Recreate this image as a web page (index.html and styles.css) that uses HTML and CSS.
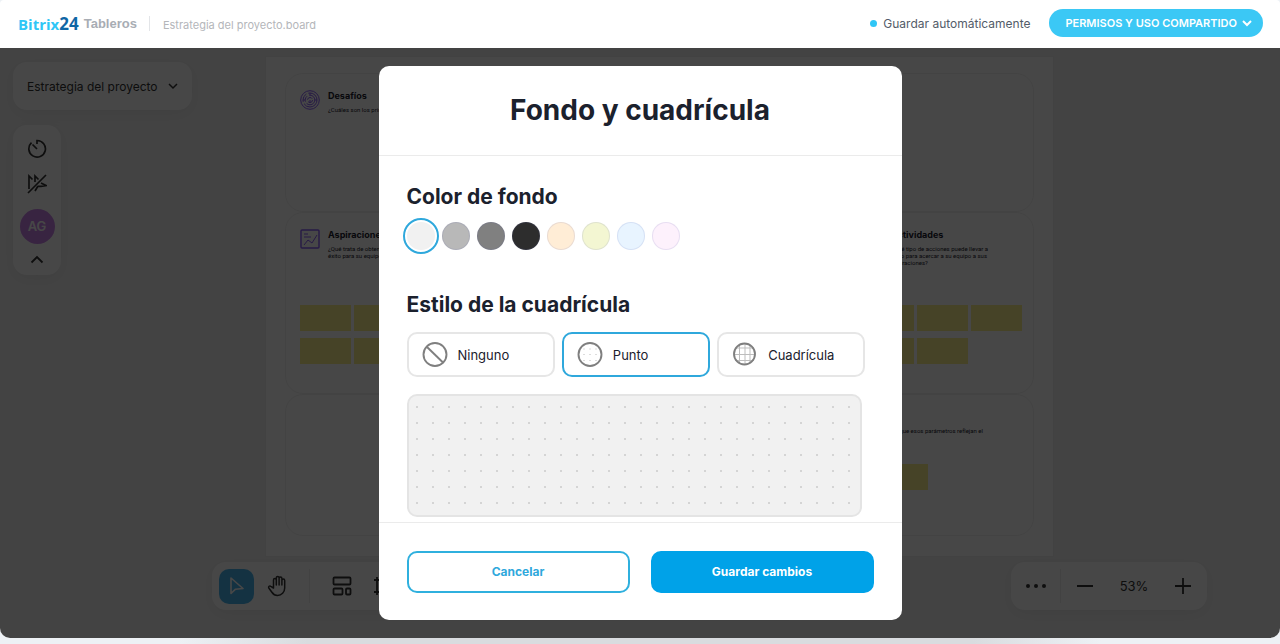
FILE: index.html
```html
<!DOCTYPE html>
<html lang="es">
<head>
    <meta charset="UTF-8">
    <meta name="viewport" content="width=device-width, initial-scale=1.0">
    <title>Estrategia del proyecto.board</title>
    <link rel="stylesheet" href="styles.css">
</head>
<body>
    <header class="topbar">
        <a class="logo" href="#"><span class="logo-name">Bitrix</span><span class="logo-num">24</span></a>
        <span class="product">Tableros</span>
        <span class="file-name">Estrategia del proyecto.board</span>
        <span class="autosave">Guardar automáticamente</span>
        <button class="share" type="button">
            PERMISOS Y USO COMPARTIDO
            <svg width="10" height="7" viewBox="0 0 10 7"><path d="M1 1l4 4 4-4" fill="none" stroke="currentColor" stroke-width="2"/></svg>
        </button>
    </header>

    <main class="board">
        <!-- Lienzo -->
        <div class="frame">
            <section class="card card-wide">
                <div class="card-head">
                    <svg class="card-icon" width="20" height="20" viewBox="0 0 20 20" fill="none" stroke="currentColor">
                        <circle cx="10" cy="10" r="9.3"/>
                        <circle cx="10" cy="10" r="7" stroke-dasharray="18 2 9 2"/>
                        <circle cx="10" cy="10" r="4.8" stroke-dasharray="11 2 6 2"/>
                        <circle cx="10" cy="10" r="2.5" stroke-dasharray="6 2"/>
                        <path d="M10 10v3M3 10h2M15 10h2M10 3v2"/>
                    </svg>
                    <div>
                        <h4>Desafíos</h4>
                        <p>¿Cuáles son los principales?</p>
                    </div>
                </div>
            </section>
            <section class="card">
                <div class="card-head">
                    <svg class="card-icon" width="20" height="20" viewBox="0 0 20 20" fill="none" stroke="currentColor">
                        <rect x="1" y="1" width="18" height="18" rx="1" stroke-width="1.4"/>
                        <path d="M4 5h4M4 8h7M4 16l4-5 4 3 5-8"/>
                    </svg>
                    <div>
                        <h4>Aspiraciones</h4>
                        <p>¿Qué trata de obtener con<br>éxito para su equipo?</p>
                    </div>
                </div>
                <div class="notes">
                    <i></i><i></i><i></i><i></i><i></i>
                </div>
            </section>
            <section class="card"></section>
            <section class="card card-actions">
                <div class="card-head">
                    <span class="card-icon"></span>
                    <div>
                        <h4>Actividades</h4>
                        <p>¿Qué tipo de acciones puede llevar a<br>cabo para acercar a su equipo a sus<br>aspiraciones?</p>
                    </div>
                </div>
                <div class="notes">
                    <i></i><i></i><i></i><i></i><i></i>
                </div>
            </section>
            <section class="card card-wide card-last">
                <p>¿Por qué cree que esos parámetros reflejan el</p>
                <div class="notes"><i></i><i></i></div>
            </section>
        </div>

        <button class="panel board-name" type="button">
            Estrategia del proyecto
            <svg width="10" height="7" viewBox="0 0 10 7"><path d="M1 1l4 4 4-4" fill="none" stroke="currentColor" stroke-width="1.5"/></svg>
        </button>

        <div class="panel side-panel">
            <button type="button" aria-label="Temporizador">
                <svg width="20" height="20" viewBox="0 0 20 20" fill="none" stroke="currentColor" stroke-width="1.7"><path d="M10 5V1.500a8.300 8.300 0 1 1-5.500 2.200M10 10L5.500 5.500"/></svg>
            </button>
            <button type="button" aria-label="Ocultar cursores">
                <svg width="20" height="20" viewBox="0 0 20 20" fill="none" stroke="currentColor" stroke-width="1.7"><path d="M1 19L19 1M2 15V2l3.500 3.500M8 8V2l3.500 3.500M14 9l5 2.500-5 .8-3 0M11 12l-3 5"/></svg>
            </button>
            <span class="avatar">AG</span>
            <button type="button" aria-label="Contraer">
                <svg width="14" height="9" viewBox="0 0 14 9"><path d="M1.500 7.500L7 2l5.500 5.500" fill="none" stroke="currentColor" stroke-width="1.800"/></svg>
            </button>
        </div>

        <div class="panel tools">
            <button class="active" type="button" aria-label="Seleccionar">
                <svg width="18" height="20" viewBox="0 0 18 20"><path d="M3 2v15.500l4.500-4.300 7.500-.7z" fill="none" stroke="currentColor" stroke-width="1.600" stroke-linejoin="round"/></svg>
            </button>
            <button type="button" aria-label="Mover">
                <svg width="22" height="22" viewBox="0 0 22 22"><path d="M6.500 13V5a1.400 1.400 0 0 1 2.800 0v5V2.800a1.400 1.400 0 0 1 2.800 0V10 3.500a1.400 1.400 0 0 1 2.800 0V10 5.500a1.400 1.400 0 0 1 2.800 0V13a7.500 7.500 0 0 1-7.200 7.500c-3 0-4.500-1.500-5.800-3.500L1.800 13c-.8-1.500.8-2.600 2-1.700z" fill="none" stroke="currentColor" stroke-width="1.500" stroke-linejoin="round"/></svg>
            </button>
            <span class="divider"></span>
            <button type="button" aria-label="Plantillas">
                <svg width="20" height="20" viewBox="0 0 20 20" fill="none" stroke="currentColor" stroke-width="1.800"><rect x="1.500" y="1.500" width="17" height="7" rx="1"/><rect x="1.500" y="12.500" width="9" height="6" rx="1"/><rect x="14" y="12.500" width="4.500" height="6" rx="1"/></svg>
            </button>
            <button type="button" aria-label="Marco">
                <svg width="20" height="20" viewBox="0 0 20 20"><path d="M4 1v18M16 1v18M1 4h18M1 16h18" fill="none" stroke="currentColor" stroke-width="1.800"/></svg>
            </button>
        </div>

        <div class="panel zoom">
            <button type="button" aria-label="Más">
                <svg width="20" height="4" viewBox="0 0 20 4" fill="currentColor"><circle cx="2" cy="2" r="2"/><circle cx="10" cy="2" r="2"/><circle cx="18" cy="2" r="2"/></svg>
            </button>
            <span class="divider"></span>
            <button type="button" aria-label="Alejar">
                <svg width="18" height="18" viewBox="0 0 18 18"><path d="M1 9h16" stroke="currentColor" stroke-width="1.800"/></svg>
            </button>
            <span class="zoom-value">53%</span>
            <button type="button" aria-label="Acercar">
                <svg width="18" height="18" viewBox="0 0 18 18"><path d="M1 9h16M9 1v16" stroke="currentColor" stroke-width="1.800"/></svg>
            </button>
        </div>

        <div class="overlay">
            <form class="modal" role="dialog" aria-labelledby="modal-title">
                <h2 id="modal-title">Fondo y cuadrícula</h2>
                <div class="modal-body">
                    <h3>Color de fondo</h3>
                    <div class="swatches">
                        <input type="radio" name="color" class="sw-light" aria-label="Gris claro" checked>
                        <input type="radio" name="color" class="sw-silver" aria-label="Plata">
                        <input type="radio" name="color" class="sw-gray" aria-label="Gris">
                        <input type="radio" name="color" class="sw-black" aria-label="Negro">
                        <input type="radio" name="color" class="sw-orange" aria-label="Naranja">
                        <input type="radio" name="color" class="sw-lime" aria-label="Lima">
                        <input type="radio" name="color" class="sw-blue" aria-label="Azul">
                        <input type="radio" name="color" class="sw-pink" aria-label="Rosa">
                    </div>

                    <h3>Estilo de la cuadrícula</h3>
                    <div class="grid-styles">
                        <label>
                            <input type="radio" name="grid">
                            <svg width="26" height="26" viewBox="0 0 26 26" fill="none" stroke="#7f7f7f" stroke-width="1.900"><circle cx="13" cy="12.500" r="11.500"/><path d="M4.500 4.500l17 16.500"/></svg>
                            Ninguno
                        </label>
                        <label>
                            <input type="radio" name="grid" checked>
                            <svg width="26" height="26" viewBox="0 0 26 26">
                                <circle cx="13" cy="12.500" r="11.500" fill="none" stroke="#7f7f7f" stroke-width="1.900"/>
                                <path d="M6.500 12.500h1m5 0h1m5 0h1M6.500 7h1m5 0h1m5 0h1M6.500 18.500h1m5 0h1m5 0h1" stroke="#bbb"/>
                            </svg>
                            Punto
                        </label>
                        <label>
                            <input type="radio" name="grid">
                            <svg width="26" height="26" viewBox="0 0 26 26" fill="none">
                                <path d="M7.500 3v18M13 1.500v21M18 3v18M3 6h19M2 12.500h21M3 18.500h19" stroke="#bdbdbd"/>
                                <circle cx="12.500" cy="12" r="10.500" stroke="#7f7f7f" stroke-width="1.900"/>
                            </svg>
                            Cuadrícula
                        </label>
                    </div>
                    <div class="preview"></div>
                </div>
                <div class="modal-footer">
                    <button class="btn" type="button">Cancelar</button>
                    <button class="btn btn-primary" type="button">Guardar cambios</button>
                </div>
            </form>
        </div>
    </main>
</body>
</html>
```
FILE: styles.css
```css
* {
    box-sizing: border-box;
}

body {
    margin: 0;
    height: 100vh;
    display: flex;
    flex-direction: column;
    padding-bottom: 6px;
    font-family: Inter, "Liberation Sans", sans-serif;
    color: #1b212d;
    background: linear-gradient(to right, #edf1f5 14%, #d9dcdf 24%, #d9dcdf 76%, #edf1f5 86%);
}

h2, h3, h4, p {
    margin: 0;
}

button {
    font-family: inherit;
    border: 0;
    padding: 0;
    background: none;
    color: inherit;
    cursor: pointer;
}

svg {
    display: block;
    flex: none;
}

/* Barra superior */
.topbar {
    display: flex;
    align-items: center;
    height: 48px;
    padding: 0 17px 2px 18px;
    background: #fff;
    border-radius: 4px 4px 0 0;
}

.logo {
    font: bold 15px "Open Sans", sans-serif;
    text-decoration: none;
}

.logo-name {
    color: #2fc6f6;
}

.logo-num {
    font-size: 17px;
    color: #0f66a5;
}

.product {
    margin-left: 5px;
    padding-right: 12px;
    font: bold 13px "Liberation Sans", sans-serif;
    color: #a8adb4;
    border-right: 1px solid #e3e5e8;
}

.file-name {
    margin-left: 13px;
    padding-top: 4px;
    font-size: 11px;
    color: #b4b6ba;
}

.autosave {
    display: flex;
    align-items: center;
    gap: 6px;
    margin-left: auto;
    font-size: 12px;
    color: #535c69;
}

.autosave::before {
    content: "";
    width: 7px;
    height: 7px;
    border-radius: 50%;
    background: #2fc6f6;
}

.share {
    display: flex;
    align-items: center;
    gap: 5px;
    height: 28px;
    margin-left: 19px;
    padding: 0 11px 0 16px;
    border-radius: 14px;
    background: #3bc8f5;
    color: #fff;
    font-size: 11px;
    font-weight: 600;
}

/* Tablero */
.board {
    position: relative;
    flex: 1;
    overflow: hidden;
    border-radius: 0 0 10px 10px;
    background: #f1f1f1;
}

.frame {
    position: absolute;
    top: 8px;
    left: 265px;
    width: 789px;
    display: grid;
    grid-template-columns: 190px 1fr 190px;
    grid-template-rows: 139px 182px 142px;
    padding: 16px 19px 20px;
    background: #fff;
    border: 1px solid #eee;
}

.card {
    padding: 16px 14px;
    border: 1px solid #f0f0f0;
    border-radius: 18px;
}

.card-wide {
    grid-column: 1 / -1;
}

.card-head {
    display: flex;
    gap: 8px;
    height: 62px;
}

.card-icon {
    width: 20px;
    height: 20px;
    color: #8b5cf6;
}

.card h4 {
    font-size: 9px;
    line-height: 11px;
    margin-bottom: 5px;
}

.card p {
    font-family: Roboto, sans-serif;
    font-size: 6px;
    line-height: 7px;
    white-space: nowrap;
}

.notes {
    display: flex;
    flex-wrap: wrap;
    gap: 7px 3px;
    margin-top: 14px;
    margin-right: -4px;
}

.notes i {
    width: 51px;
    height: 26px;
    background: #faef8c;
}

.card-actions {
    padding-left: 18px;
}

.card-last {
    display: flex;
    flex-direction: column;
    align-items: flex-end;
    padding: 32px 50px;
}

.card-last .notes {
    margin: 30px 55px 0 0;
}

.panel {
    position: absolute;
    display: flex;
    align-items: center;
    background: #fff;
    border-radius: 14px;
    box-shadow: 0 4px 16px rgba(0, 0, 0, 0.06);
    color: #333;
}

.panel button {
    display: flex;
    align-items: center;
    justify-content: center;
}

.board-name {
    top: 14px;
    left: 13px;
    height: 48px;
    padding: 0 14px;
    gap: 10px;
    font-size: 12px;
}

.side-panel {
    top: 77px;
    left: 13px;
    width: 48px;
    flex-direction: column;
    padding: 14px 0 11px;
    gap: 15px;
}

.avatar {
    width: 35px;
    height: 35px;
    border-radius: 50%;
    background: #c883e8;
    color: #fff;
    font-size: 13px;
    font-weight: 600;
    line-height: 35px;
    text-align: center;
}

.side-panel .avatar + button {
    margin-top: -4px;
}

.tools {
    bottom: 28px;
    left: 212px;
    width: 600px;
    height: 48px;
    padding-left: 7px;
    gap: 6px;
}

.tools button {
    width: 35px;
    height: 35px;
    border-radius: 10px;
}

.tools .active {
    background: #4ab4ec;
    color: #fff;
}

.divider {
    width: 1px;
    height: 34px;
    background: #ececec;
}

.tools .divider {
    margin: 0 8px;
}

.zoom {
    right: 73px;
    bottom: 28px;
    width: 196px;
    height: 48px;
    padding: 0 15px;
}

.zoom .divider {
    margin: 0 15px 0 14px;
}

.zoom-value {
    flex: 1;
    text-align: center;
    font-size: 13px;
}

/* Ventana modal */
.overlay {
    position: absolute;
    inset: 0;
    display: flex;
    align-items: center;
    justify-content: center;
    background: rgba(0, 0, 0, 0.72);
}

.modal {
    width: 523px;
    max-width: 100%;
    background: #fff;
    border-radius: 10px;
}

.modal h2 {
    padding: 27px 0 28px;
    font-size: 28px;
    line-height: 34px;
    text-align: center;
    border-bottom: 1px solid #ebebeb;
}

.modal-body {
    padding: 28px 28px 5px;
}

.modal h3 {
    font-size: 21px;
    line-height: 26px;
}

.swatches {
    display: flex;
    gap: 7px;
    margin: 12px 0 42px;
}

.swatches input {
    appearance: none;
    width: 28px;
    height: 28px;
    margin: 0;
    border: 1px solid rgba(82, 92, 170, 0.12);
    border-radius: 50%;
}

.swatches input:checked {
    border-color: transparent;
    outline: 2px solid #2fa8dc;
    outline-offset: 2px;
}

.sw-light { background: #f1f1f1; }
.sw-silver { background: #b8b8b8; }
.sw-gray { background: #808080; }
.sw-black { background: #2d2d2d; }
.sw-orange { background: #ffedd6; }
.sw-lime { background: #f3f6d2; }
.sw-blue { background: #e8f4ff; }
.sw-pink { background: #fdf1fc; }

.grid-styles {
    display: flex;
    gap: 7px;
    margin: 14px 8px 17px 0;
}

.grid-styles label {
    flex: 1;
    display: flex;
    align-items: center;
    gap: 10px;
    height: 45px;
    padding: 0 13px;
    border: 2px solid #e6e6e6;
    border-radius: 10px;
    font-size: 13px;
}

.grid-styles label:has(:checked) {
    border-color: #2fa8dc;
}

.grid-styles input {
    appearance: none;
    position: absolute;
    margin: 0;
}

.preview {
    height: 123px;
    margin-right: 12px;
    border: 2px solid #e4e4e4;
    border-radius: 10px;
    background: radial-gradient(circle, #d4d4d4 1px, transparent 1px) 0 3px / 16px 16px #f1f1f1;
}

.modal-footer {
    display: flex;
    gap: 21px;
    padding: 28px 28px 27px;
    border-top: 1px solid #ebebeb;
}

.modal-footer .btn {
    flex: 1;
    height: 42px;
    padding-bottom: 2px;
    border: 2px solid #2fb0de;
    border-radius: 10px;
    font-size: 12px;
    font-weight: 700;
    color: #2fa8dc;
}

.modal-footer .btn-primary {
    background: #00a2e8;
    border-color: #00a2e8;
    color: #fff;
}
```
